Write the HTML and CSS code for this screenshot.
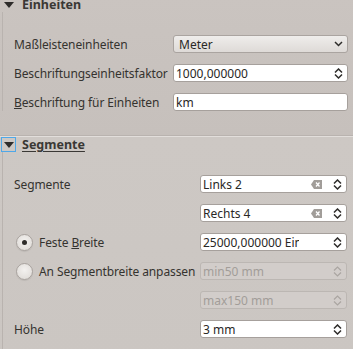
FILE: index.html
```html
<!DOCTYPE html>
<html lang="de">
<head>
  <meta charset="UTF-8">
  <title>Maßstabsleiste - Einheiten und Segmente</title>
  <link rel="stylesheet" href="styles.css">
</head>
<body>
  <div class="panel">

    <!-- Einheiten -->
    <section class="group group-units">
      <div class="group-title">
        <span class="toggle"><svg width="10" height="6" viewBox="0 0 10 6"><path d="M0 0H10L5 6Z" fill="#2e2c2a"/></svg></span>
        <span class="title-text">Einheiten</span>
      </div>
      <div class="group-body form-units">
        <label class="row-label">Maßleisteneinheiten</label>
        <div class="field combo">
          <span class="text">Meter</span>
          <svg class="icon" width="9" height="6" viewBox="0 0 9 6"><path d="M1 1L4.5 4.5L8 1" fill="none" stroke="#2e2c2a" stroke-width="1.5"/></svg>
        </div>

        <label class="row-label">Beschriftungseinheitsfaktor</label>
        <div class="field">
          <span class="text">1000,000000</span>
          <svg class="icon" width="9" height="11" viewBox="0 0 9 11"><path d="M1 4.5L4.5 1L8 4.5M1 6.5L4.5 10L8 6.5" fill="none" stroke="#2e2c2a" stroke-width="1.5"/></svg>
        </div>

        <label class="row-label"><u>B</u>eschriftung für Einheiten</label>
        <div class="field">
          <span class="text">km</span>
        </div>
      </div>
    </section>

    <!-- Segmente -->
    <section class="group group-segments">
      <div class="group-title">
        <span class="toggle focused"><svg width="10" height="6" viewBox="0 0 10 6"><path d="M0 0H10L5 6Z" fill="#2e2c2a"/></svg></span>
        <span class="title-text"><u>Segmente</u></span>
      </div>
      <div class="group-body form-segments">
        <label class="row-label">Segmente</label>
        <div class="field">
          <span class="text">Links 2</span>
          <svg class="clear" width="11" height="9" viewBox="0 0 11 9"><path d="M3 0H11V9H3L0 4.5Z" fill="#a19d99"/><path d="M5 2.5L8.5 6.5M8.5 2.5L5 6.5" stroke="#fff" stroke-width="1.3"/></svg>
          <svg class="icon" width="9" height="11" viewBox="0 0 9 11"><path d="M1 4.5L4.5 1L8 4.5M1 6.5L4.5 10L8 6.5" fill="none" stroke="#2e2c2a" stroke-width="1.5"/></svg>
        </div>

        <span></span>
        <div class="field">
          <span class="text">Rechts 4</span>
          <svg class="clear" width="11" height="9" viewBox="0 0 11 9"><path d="M3 0H11V9H3L0 4.5Z" fill="#a19d99"/><path d="M5 2.5L8.5 6.5M8.5 2.5L5 6.5" stroke="#fff" stroke-width="1.3"/></svg>
          <svg class="icon" width="9" height="11" viewBox="0 0 9 11"><path d="M1 4.5L4.5 1L8 4.5M1 6.5L4.5 10L8 6.5" fill="none" stroke="#2e2c2a" stroke-width="1.5"/></svg>
        </div>

        <label class="row-label radio-label"><span class="radio checked"></span><span>Feste <u>B</u>reite</span></label>
        <div class="field">
          <span class="text text-clip">25000,000000 Einheiten</span>
          <svg class="icon" width="9" height="11" viewBox="0 0 9 11"><path d="M1 4.5L4.5 1L8 4.5M1 6.5L4.5 10L8 6.5" fill="none" stroke="#2e2c2a" stroke-width="1.5"/></svg>
        </div>

        <label class="row-label radio-label"><span class="radio"></span><span>An Segmentbreite anpassen</span></label>
        <div class="field disabled">
          <span class="text">min50 mm</span>
          <svg class="icon" width="9" height="11" viewBox="0 0 9 11"><path d="M1 4.5L4.5 1L8 4.5M1 6.5L4.5 10L8 6.5" fill="none" stroke="#aaa5a1" stroke-width="1.2"/></svg>
        </div>

        <span></span>
        <div class="field disabled">
          <span class="text">max150 mm</span>
          <svg class="icon" width="9" height="11" viewBox="0 0 9 11"><path d="M1 4.5L4.5 1L8 4.5M1 6.5L4.5 10L8 6.5" fill="none" stroke="#aaa5a1" stroke-width="1.2"/></svg>
        </div>

        <label class="row-label">Höhe</label>
        <div class="field">
          <span class="text">3 mm</span>
          <svg class="icon" width="9" height="11" viewBox="0 0 9 11"><path d="M1 4.5L4.5 1L8 4.5M1 6.5L4.5 10L8 6.5" fill="none" stroke="#2e2c2a" stroke-width="1.5"/></svg>
        </div>
      </div>
    </section>

  </div>
</body>
</html>
```

FILE: styles.css
```css
/* General Styles */
body {
  margin: 0;
  font-family: "Noto Sans", Lato, sans-serif;
  font-size: 12px;
  color: #35332f;
  background: #cdc8c4;
  overflow: hidden;
}

.panel {
  margin-top: -4px;
}

/* Collapsible groups */
.group {
  border-top: 1px solid #e2dedb;
}

.group-units {
  background: linear-gradient(#cac4c0, #c6c0bc);
  padding-bottom: 25px;
}

.group-segments {
  background: linear-gradient(#cdc8c4, #cbc6c2);
  box-shadow: 0 -1px 0 #b9b3af;
}

.group-title {
  display: flex;
  align-items: center;
  height: 15px;
  gap: 6px;
  padding-left: 1px;
  font-size: 12.5px;
  font-weight: bold;
  color: #3a3835;
}

.toggle {
  box-sizing: border-box;
  width: 15px;
  height: 15px;
  display: flex;
  align-items: center;
  justify-content: center;
  border: 1px solid transparent;
}

.toggle.focused {
  border-color: #4fa8e8;
}

.title-text u {
  text-decoration-thickness: 1px;
  text-underline-offset: 2px;
}

.group-body {
  display: grid;
  grid-auto-rows: 18px;
  row-gap: 11px;
  align-items: center;
  margin-left: 2px;
  border-left: 1px solid #b9b3af;
  padding: 23px 5px 0 11px;
}

.form-units {
  grid-template-columns: 159px 1fr;
}

.form-segments {
  grid-template-columns: 186px 1fr;
  padding-right: 6px;
  padding-bottom: 20px;
}

.row-label {
  white-space: nowrap;
  letter-spacing: -0.1px;
}

/* Radio buttons */
.radio-label {
  display: flex;
  align-items: center;
  gap: 6px;
  padding-left: 2px;
}

.radio {
  flex-shrink: 0;
  box-sizing: border-box;
  width: 17px;
  height: 17px;
  border-radius: 50%;
  border: 1px solid #a9a39f;
  background: radial-gradient(circle at 50% 40%, #f3f1ef, #dcd8d4);
  box-shadow: 0 1px 1px rgba(0, 0, 0, 0.08);
  display: flex;
  align-items: center;
  justify-content: center;
}

.radio.checked::after {
  content: "";
  width: 5px;
  height: 5px;
  border-radius: 50%;
  background: #2e2c2a;
}

/* Inputs */
.field {
  box-sizing: border-box;
  height: 18px;
  display: flex;
  align-items: center;
  padding: 0 4px 0 2px;
  background: #fff;
  border: 1px solid #a6a09c;
  border-radius: 3px;
  color: #2a2826;
}

.field .text {
  flex: 1;
  overflow: hidden;
  white-space: nowrap;
}

.field .text-clip {
  flex: 0 0 96px;
  margin-right: auto;
}

.field .clear {
  margin-right: 11px;
}

.combo {
  padding-left: 5px;
  background: linear-gradient(#efedeb, #dedad7);
  border-color: #aaa4a0;
}

.disabled {
  background: #d2cdca;
  border-color: #bcb7b3;
  color: #a29d99;
}
```
